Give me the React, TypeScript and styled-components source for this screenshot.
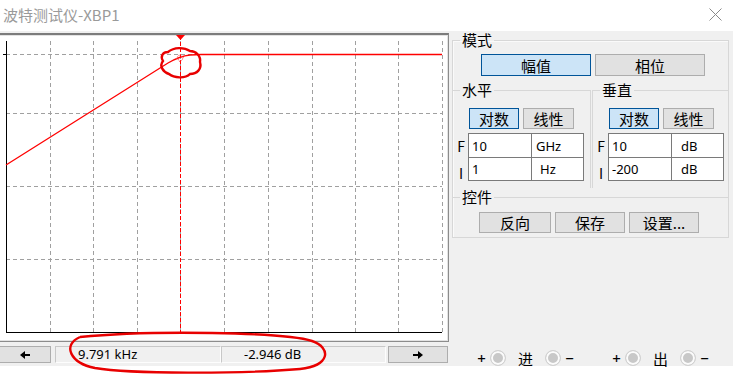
import styled, { createGlobalStyle } from "styled-components";

const GlobalStyle = createGlobalStyle`
  html, body {
    margin: 0;
    padding: 0;
    background: #fff;
  }
`;

const CJK = `"Noto Sans CJK SC", "Noto Sans", sans-serif`;
const LATIN = `"Noto Sans", "Liberation Sans", "Noto Sans CJK SC", sans-serif`;

const gridX = [50, 93, 137, 180, 224, 268, 312, 355, 398, 442];
const gridY = [54, 113, 186, 259];

const App = () => {
  return (
    <Window>
      <GlobalStyle />
      <TitleBar>
        <Title>波特测试仪-XBP1</Title>
        <svg width="13" height="13" viewBox="0 0 13 13">
          <path d="M0.5 0.5 L12.5 12.5 M12.5 0.5 L0.5 12.5" stroke="#8a8a8a" strokeWidth="1" />
        </svg>
      </TitleBar>

      <Body>
        <LeftColumn>
          <PlotFrame>
            <svg width="449" height="306" viewBox="-1 35 449 306">
              {gridX.map((x) => (
                <line key={"v" + x} x1={x + 0.5} y1={41} x2={x + 0.5} y2={332} stroke="#a0a0a0" strokeDasharray="4 3" />
              ))}
              {gridY.map((y) => (
                <line key={"h" + y} x1={6} y1={y + 0.5} x2={442} y2={y + 0.5} stroke="#a0a0a0" strokeDasharray="4 3" />
              ))}
              <line x1={6.5} y1={41} x2={6.5} y2={333} stroke="#000" />
              <line x1={6} y1={332.5} x2={442} y2={332.5} stroke="#000" />
              <line x1={3} y1={54.5} x2={7} y2={54.5} stroke="#000" />

              <path
                d="M6 165 L168 63 Q180 56 190 55 Q196 54.5 201 54.5 L442 54.5"
                fill="none"
                stroke="#ff0000"
                strokeWidth="1.3"
              />

              <line x1={180.5} y1={36} x2={180.5} y2={332} stroke="#ff0000" strokeDasharray="4 2" />
              <polygon points="176,35 185,35 180.5,40" fill="#ff0000" />
              <rect
                x={177.5}
                y={55.5}
                width={5}
                height={5}
                transform="rotate(45 180 58)"
                fill="none"
                stroke="#ff5050"
                strokeDasharray="1 1"
              />
            </svg>
          </PlotFrame>

          <ReadoutRow>
            <ArrowButton $width={52}>
              <svg width="10" height="8" viewBox="0 0 10 8">
                <path d="M10 3 H5 V0 L0 4 L5 8 V5 H10 Z" fill="#000" />
              </svg>
            </ArrowButton>
            <Readouts>
              <Readout>9.791 kHz</Readout>
              <Readout>-2.946 dB</Readout>
            </Readouts>
            <ArrowButton $width={60}>
              <svg width="10" height="8" viewBox="0 0 10 8">
                <path d="M0 3 H5 V0 L10 4 L5 8 V5 H0 Z" fill="#000" />
              </svg>
            </ArrowButton>
          </ReadoutRow>
        </LeftColumn>

        <RightColumn>
          <Group>
            <Legend>模式</Legend>
            <ModeRow>
              <Button $active $width={110} $height={22}>幅值</Button>
              <Button $width={110} $height={22}>相位</Button>
            </ModeRow>

            <SubGroups>
              <SubGroup $side="right">
                <Legend>水平</Legend>
                <ScaleRow>
                  <Button $active $width={50} $height={21}>对数</Button>
                  <Button $width={51} $height={21}>线性</Button>
                </ScaleRow>
                <FieldGrid>
                  <FieldLabel>F</FieldLabel>
                  <Field>10</Field>
                  <Field $indent={4}>GHz</Field>
                  <FieldLabel $low>I</FieldLabel>
                  <Field>1</Field>
                  <Field $indent={8}>Hz</Field>
                </FieldGrid>
              </SubGroup>

              <SubGroup $side="left">
                <Legend>垂直</Legend>
                <ScaleRow>
                  <Button $active $width={50} $height={21}>对数</Button>
                  <Button $width={51} $height={21}>线性</Button>
                </ScaleRow>
                <FieldGrid>
                  <FieldLabel>F</FieldLabel>
                  <Field>10</Field>
                  <Field $indent={9}>dB</Field>
                  <FieldLabel $low>I</FieldLabel>
                  <Field>-200</Field>
                  <Field $indent={9}>dB</Field>
                </FieldGrid>
              </SubGroup>
            </SubGroups>

            <ControlGroup>
              <Legend>控件</Legend>
              <ControlRow>
                <Button $width={72} $height={21}>反向</Button>
                <Button $width={70} $height={21}>保存</Button>
                <Button $width={70} $height={21}>设置...</Button>
              </ControlRow>
            </ControlGroup>
          </Group>

          <Terminals>
            <Terminal>
              <Sign>+</Sign>
              <Jack />
              <TerminalName>进</TerminalName>
              <Jack />
              <Sign>−</Sign>
            </Terminal>
            <Terminal>
              <Sign>+</Sign>
              <Jack />
              <TerminalName>出</TerminalName>
              <Jack />
              <Sign>−</Sign>
            </Terminal>
          </Terminals>
        </RightColumn>
      </Body>

      <Annotations width="733" height="376" viewBox="0 0 733 376">
        <path
          d="M168 52 C174 47 184 47 190 51 C196 51 201 56 200 62 C202 69 197 74 190 74 C185 79 174 78 169 74 C163 72 159 66 163 61 C160 56 163 52 168 52 Z"
          fill="none"
          stroke="#e80000"
          strokeWidth="2.4"
        />
        <path
          d="M80 337 C150 330 285 332 312 341 C332 348 330 366 300 369 C240 374 130 374 95 368 C70 363 62 345 80 337"
          fill="none"
          stroke="#e80000"
          strokeWidth="2.4"
        />
      </Annotations>
    </Window>
  );
};

export default App;

const Window = styled.div`
  position: relative;
  width: 733px;
  height: 376px;
  background: #fff;
  overflow: hidden;
  font-family: ${LATIN};
`;

const TitleBar = styled.div`
  height: 31px;
  display: flex;
  align-items: center;
  justify-content: space-between;
  padding: 0 11px 3px 3px;
  box-sizing: border-box;
`;

const Title = styled.div`
  font-family: ${CJK};
  font-size: 15px;
  color: #9a9a9a;
`;

const Body = styled.div`
  height: 335px;
  background: #f0f0f0;
  display: flex;
`;

const LeftColumn = styled.div`
  width: 449px;
  flex-shrink: 0;
  display: flex;
  flex-direction: column;
`;

const PlotFrame = styled.div`
  margin: 2px 0 0 -2px;
  width: 451px;
  height: 309px;
  box-sizing: border-box;
  border: 1px solid #8c8c8c;
  border-top: 2px solid #7c7c7c;
  background: #fff;
  box-shadow: inset 0 0 0 1px #e3e3e3;

  & svg {
    display: block;
  }
`;

const ReadoutRow = styled.div`
  margin-top: 4px;
  height: 17px;
  display: flex;
  align-items: stretch;
`;

const ArrowButton = styled.div<{ $width: number }>`
  width: ${(p) => p.$width}px;
  box-sizing: border-box;
  background: #e1e1e1;
  border: 1px solid #adadad;
  display: flex;
  align-items: center;
  justify-content: center;
  margin-left: ${(p) => (p.$width === 60 ? "2px" : "-1px")};
`;

const Readouts = styled.div`
  margin-left: 4px;
  width: 331px;
  display: grid;
  grid-template-columns: 166px 1fr;
`;

const Readout = styled.div`
  box-sizing: border-box;
  border: 1px solid;
  border-color: #c8c8c8 #fdfdfd #fdfdfd #c8c8c8;
  padding-left: 22px;
  font-size: 13px;
  line-height: 15px;
  color: #000;
`;

const RightColumn = styled.div`
  margin-left: 3px;
  width: 277px;
  display: flex;
  flex-direction: column;
`;

const Group = styled.fieldset`
  margin: 0;
  padding: 0;
  min-inline-size: 0;
  border: 1px solid #d7d7d7;
  box-shadow: inset 1px 1px 0 #fafafa;
`;

const Legend = styled.legend`
  margin-left: 7px;
  padding: 0 2px;
  font-family: ${CJK};
  font-size: 15px;
  line-height: 18px;
  color: #000;
`;

const Button = styled.div<{ $active?: boolean; $width: number; $height: number }>`
  width: ${(p) => p.$width}px;
  height: ${(p) => p.$height}px;
  box-sizing: border-box;
  display: flex;
  align-items: center;
  justify-content: center;
  font-family: ${CJK};
  font-size: 15px;
  color: #000;
  background: ${(p) => (p.$active ? "#cce4f7" : "#e1e1e1")};
  border: 1px solid ${(p) => (p.$active ? "#005499" : "#adadad")};
`;

const ModeRow = styled.div`
  display: flex;
  gap: 4px;
  margin: 5px 0 0 28px;
`;

const SubGroups = styled.div`
  display: grid;
  grid-template-columns: 138px 1fr;
  column-gap: 1px;
  margin-top: 5px;
`;

const SubGroup = styled.fieldset<{ $side: "left" | "right" }>`
  margin: 0;
  padding: 0 0 7px 0;
  min-inline-size: 0;
  border: none;
  border-top: 1px solid #d7d7d7;
  ${(p) => (p.$side === "right" ? "border-right: 1px solid #d7d7d7;" : "border-left: 1px solid #d7d7d7;")}
`;

const ScaleRow = styled.div`
  display: flex;
  gap: 4px;
  margin: 9px 0 0 16px;
`;

const FieldGrid = styled.div`
  display: grid;
  grid-template-columns: 16px 63px 52px;
  grid-template-rows: 24px 23px;
  margin-top: 5px;
`;

const FieldLabel = styled.div<{ $low?: boolean }>`
  font-family: ${CJK};
  font-size: 14px;
  color: #000;
  text-align: center;
  display: flex;
  justify-content: center;
  align-items: center;
  padding-top: ${(p) => (p.$low ? "7px" : "0")};
`;

const Field = styled.div<{ $indent?: number }>`
  margin: -1px 0 0 -1px;
  border: 1px solid #7a7a7a;
  background: #fff;
  display: flex;
  align-items: center;
  padding-left: ${(p) => p.$indent ?? 3}px;
  font-size: 13px;
  color: #000;
`;

const ControlGroup = styled.fieldset`
  margin: 0;
  padding: 0 0 4px 0;
  min-inline-size: 0;
  border: none;
  border-top: 1px solid #d7d7d7;
`;

const ControlRow = styled.div`
  display: flex;
  gap: 4px;
  margin: 6px 0 0 26px;
`;

const Terminals = styled.div`
  margin: auto 0 0 25px;
  height: 16px;
  display: flex;
  gap: 38px;
`;

const Terminal = styled.div`
  display: flex;
  align-items: center;
`;

const Sign = styled.span`
  font-family: ${LATIN};
  font-size: 15px;
  font-weight: 500;
  color: #000;
  width: 9px;
  text-align: center;
`;

const Jack = styled.span`
  flex-shrink: 0;
  width: 16px;
  height: 16px;
  box-sizing: border-box;
  border-radius: 50%;
  background: #c8c8c8;
  border: 1px solid #d2d2d2;
  box-shadow: inset 0 0 0 2px #fbfbfb;
  margin: 0 4px;
`;

const TerminalName = styled.span`
  font-family: ${CJK};
  font-size: 15px;
  color: #000;
  margin: 0 8px;
`;

const Annotations = styled.svg`
  position: absolute;
  top: 0;
  left: 0;
  pointer-events: none;
`;
